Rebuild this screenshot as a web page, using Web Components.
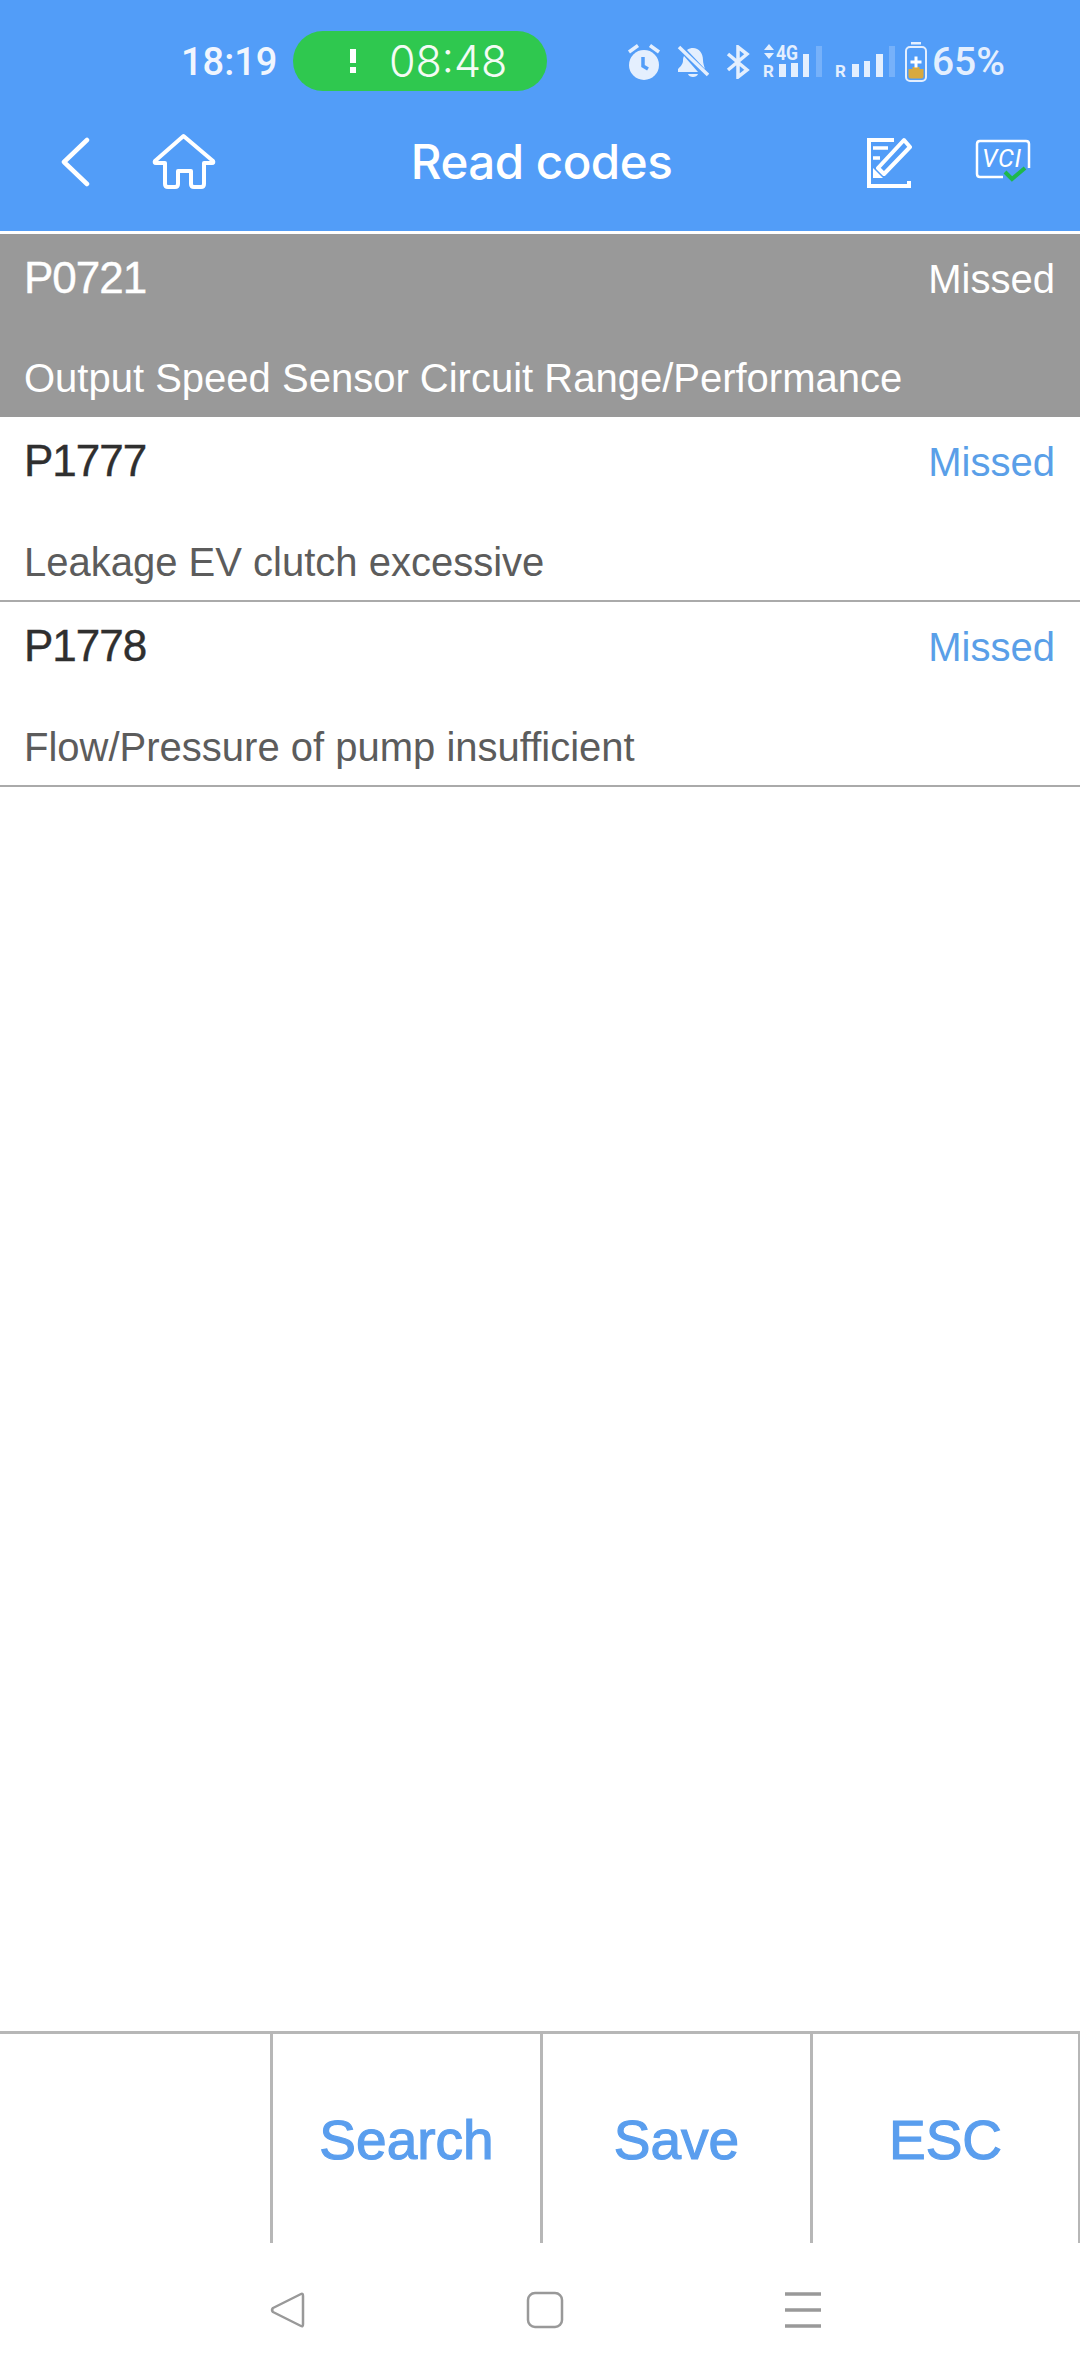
<!DOCTYPE html>
<html>
<head>
<meta charset="utf-8">
<title>Read codes</title>
<style>
    html, body { margin: 0; padding: 0; background: #fff; }
    body { width: 1080px; height: 2376px; display: flex; flex-direction: column; font-family: "Liberation Sans", Arial, sans-serif; }
    code-list { flex: 1; }
</style>
</head>
<body>
<status-bar></status-bar>
<app-header title-text="Read codes"></app-header>
<code-list>
    <code-row code="P0721" state="Missed" selected>Output Speed Sensor Circuit Range/Performance</code-row>
    <code-row code="P1777" state="Missed">Leakage EV clutch excessive</code-row>
    <code-row code="P1778" state="Missed">Flow/Pressure of pump insufficient</code-row>
</code-list>
<bottom-bar>
    <bar-button></bar-button>
    <bar-button>Search</bar-button>
    <bar-button>Save</bar-button>
    <bar-button>ESC</bar-button>
</bottom-bar>
<nav-bar></nav-bar>

<script>
class StatusBar extends HTMLElement {
    constructor() {
        super();
        this.attachShadow({ mode: 'open' });
        this.shadowRoot.innerHTML = `
            <style>
                :host {
                    display: flex;
                    align-items: center;
                    height: 92px;
                    padding: 31px 75px 0 181px;
                    box-sizing: border-box;
                    background: #529df8;
                    color: #fff;
                    font-family: Roboto, sans-serif;
                }
                .time { font-size: 38px; font-weight: 500; color: #f1f6fe; width: 112px; }
                .pill {
                    display: flex;
                    align-items: center;
                    width: 254px;
                    height: 60px;
                    border-radius: 30px;
                    background: #2fc84f;
                    margin-top: -1px;
                    box-sizing: border-box;
                    padding-left: 57px;
                }
                .mark { width: 6px; height: 24px; display: flex; flex-direction: column; justify-content: space-between; }
                .mark i { display: block; background: #fff; }
                .mark i:first-child { height: 14px; }
                .mark i:last-child { height: 6px; }
                .timer { font: 300 43px/1 Inter, sans-serif; margin-left: 33px; color: #f4fbf5; }
                .icons { display: flex; align-items: center; margin-left: auto; color: #e4effe; }
                svg { display: block; fill: currentColor; }
                .pct { font-size: 39px; font-weight: 500; margin-left: 5px; }
                .sig { position: relative; width: 61px; height: 36px; font-weight: 700; }
                .sig span { position: absolute; white-space: nowrap; }
                .sig .r { left: 0; top: 19px; font-size: 17px; line-height: 17px; }
                .sig .g { left: 13px; top: -1px; font-size: 20px; line-height: 20px; transform: scaleX(.88); transform-origin: left; }
            </style>
            <span class="time">18:19</span>
            <div class="pill"><span class="mark"><i></i><i></i></span><span class="timer">08:48</span></div>
            <div class="icons">
                <svg width="34" height="38" viewBox="0 0 34 38" style="margin-right:16px">
                    <circle cx="17" cy="22" r="15"/>
                    <path d="M2 9l9-6.500M32 9l-9-6.500" stroke="currentColor" stroke-width="3.500" fill="none"/>
                    <path d="M16 14v9l5 3" stroke="#529df8" stroke-width="3.500" fill="none"/>
                </svg>
                <svg width="32" height="34" viewBox="0 0 32 34" style="margin-right:17px">
                    <path d="M16 3c-2 0-4 .5-6 2l18 19c-1-3-2-6-2-9 0-7-4-12-10-12zM7 11c-1 2-1 3-1 5 0 3-3 6-5 8v3h20zM11 29h10c-1 4-9 4-10 0z"/>
                    <path d="M2 2l29 28" stroke="currentColor" stroke-width="3.500"/>
                </svg>
                <svg width="24" height="34" viewBox="0 0 24 34" style="margin-right:13px">
                    <path d="M2 9l19 16-9 7V2l9 7L2 25" stroke="currentColor" stroke-width="3.500" fill="none"/>
                </svg>
                <div class="sig" style="margin-right:11px">
                    <svg width="61" height="36" viewBox="0 0 61 36">
                        <path d="M1 6l5-6 5 6zM1 9h10l-5 6z"/>
                        <rect x="16" y="20" width="7" height="13"/><rect x="28" y="19" width="7" height="14"/><rect x="40" y="10" width="6" height="23"/>
                        <rect x="53" y="2" width="6" height="31" opacity=".25"/>
                    </svg>
                    <span class="g">4G</span><span class="r">R</span>
                </div>
                <div class="sig" style="margin-right:9px">
                    <svg width="61" height="36" viewBox="0 0 61 36">
                        <rect x="17" y="20" width="7" height="13"/><rect x="29" y="17" width="6" height="16"/><rect x="41" y="10" width="7" height="23"/>
                        <rect x="54" y="2" width="6" height="31" opacity=".25"/>
                    </svg>
                    <span class="r">R</span>
                </div>
                <svg width="22" height="40" viewBox="0 0 22 40">
                    <rect x="6" y="0" width="10" height="2.500"/>
                    <rect x="1" y="5" width="20" height="34" rx="4" fill="none" stroke="currentColor" stroke-width="2"/>
                    <path d="M3.500 27h4v-2h7v2h4v7q0 2.500-2.500 2.500H6q-2.500 0-2.500-2.500z" fill="#d8a93f"/>
                    <path d="M5.500 20h11M11 14.500v11" stroke="#fff" stroke-width="3" fill="none"/>
                </svg>
                <span class="pct">65%</span>
            </div>
        `;
    }
}

class AppHeader extends HTMLElement {
    constructor() {
        super();
        this.attachShadow({ mode: 'open' });
        this.shadowRoot.innerHTML = `
            <style>
                :host {
                    display: grid;
                    grid-template-columns: 1fr auto 1fr;
                    align-items: center;
                    height: 139px;
                    padding: 0 49px 0 60px;
                    box-sizing: border-box;
                    background: #529df8;
                    color: #fff;
                }
                .left, .right { display: flex; align-items: center; }
                .right { justify-content: flex-end; }
                svg { display: block; fill: none; stroke: #fff; }
                h1 {
                    margin: 0 0 0 -8px;
                    font: 500 47.5px Inter, sans-serif;
                    letter-spacing: -.5px;
                    color: #fff;
                }
                .vci { position: relative; width: 56px; height: 45px; }
                .vci span {
                    position: absolute;
                    left: 7px;
                    top: 7px;
                    font: italic 400 25px/25px Roboto, sans-serif;
                    letter-spacing: .7px;
                    white-space: nowrap;
                }
            </style>
            <div class="left">
                <svg width="30" height="50" viewBox="0 0 30 50" style="margin-right:60px">
                    <path d="M27 3L4 25l23 22" stroke-width="4.500" stroke-linecap="round" stroke-linejoin="round"/>
                </svg>
                <svg width="68" height="57" viewBox="0 0 68 57">
                    <path d="M33.500 3L63 28q1 2-1 2H54v21q0 3-3 3H44q-3 0-3-3V38H28v13q0 3-3 3H18q-3 0-3-3V30H6q-2 0-1-2z" stroke-width="4" stroke-linejoin="round"/>
                </svg>
            </div>
            <h1></h1>
            <div class="right">
                <svg width="46" height="52" viewBox="0 0 46 52" style="margin-right:63px">
                    <path d="M28 4H3v46h40v-5" stroke-width="4"/>
                    <path d="M38 4l6 7-26 27-6-6z" stroke-width="4" stroke-linejoin="round"/>
                    <path d="M7 12h15M7 22h7" stroke-width="3.500"/>
                    <path d="M7 32v10h10z" fill="#fff" stroke="none"/>
                </svg>
                <div class="vci">
                    <svg width="56" height="45" viewBox="0 0 56 45">
                        <path d="M28 38H5q-3 0-3-3V5q0-3 3-3h46q3 0 3 3v24" stroke-width="2.500"/>
                        <path d="M30 33l7 7 13-11" stroke="#1fb84c" stroke-width="4"/>
                    </svg>
                    <span>VCI</span>
                </div>
            </div>
        `;
        this.shadowRoot.querySelector('h1').textContent = this.getAttribute('title-text');
    }
}

class CodeList extends HTMLElement {
    constructor() {
        super();
        this.attachShadow({ mode: 'open' });
        this.shadowRoot.innerHTML = `
            <style>
                :host { display: block; padding-top: 3px; background: #fff; }
            </style>
            <slot></slot>
        `;
    }
}

class CodeRow extends HTMLElement {
    constructor() {
        super();
        this.attachShadow({ mode: 'open' });
        this.shadowRoot.innerHTML = `
            <style>
                :host {
                    display: block;
                    height: 185px;
                    padding: 0 25px 0 24px;
                    box-sizing: border-box;
                    border-bottom: 2px solid #aaa;
                    background: #fff;
                    color: #5c5c5c;
                }
                :host([selected]) { height: 183px; background: #999; color: #fff; border-bottom: 0; }
                .top { display: flex; justify-content: space-between; align-items: baseline; padding-top: 20px; }
                .code { font-size: 44px; line-height: 48px; color: #2f2f2f; letter-spacing: -1px; -webkit-text-stroke: .4px currentColor; }
                .state { font-size: 40px; line-height: 48px; color: #5a9fe8; }
                :host([selected]) .code, :host([selected]) .state { color: #fff; }
                .desc { font-size: 40px; line-height: 48px; margin-top: 52px; white-space: nowrap; }
                :host([selected]) .desc { margin-top: 51px; }
            </style>
            <div class="top"><span class="code"></span><span class="state"></span></div>
            <div class="desc"><slot></slot></div>
        `;
        this.shadowRoot.querySelector('.code').textContent = this.getAttribute('code');
        this.shadowRoot.querySelector('.state').textContent = this.getAttribute('state');
    }
}

class BottomBar extends HTMLElement {
    constructor() {
        super();
        this.attachShadow({ mode: 'open' });
        this.shadowRoot.innerHTML = `
            <style>
                :host {
                    display: grid;
                    grid-template-columns: repeat(4, 1fr);
                    height: 212px;
                    box-sizing: border-box;
                    border-top: 3px solid #b7b7b7;
                    background: #fff;
                }
                ::slotted(bar-button:first-child) { border-left-color: transparent; }
                ::slotted(bar-button:last-child) { border-right: 2px solid #b7b7b7; }
            </style>
            <slot></slot>
        `;
    }
}

class BarButton extends HTMLElement {
    constructor() {
        super();
        this.attachShadow({ mode: 'open' });
        this.shadowRoot.innerHTML = `
            <style>
                :host {
                    display: flex;
                    align-items: center;
                    justify-content: center;
                    padding-top: 2px;
                    border-left: 3px solid #b7b7b7;
                    font-size: 55px;
                    color: #5a9eee;
                    -webkit-text-stroke: 1.200px #5a9eee;
                }
            </style>
            <slot></slot>
        `;
    }
}

class NavBar extends HTMLElement {
    constructor() {
        super();
        this.attachShadow({ mode: 'open' });
        this.shadowRoot.innerHTML = `
            <style>
                :host {
                    display: flex;
                    align-items: center;
                    justify-content: space-between;
                    height: 133px;
                    padding: 0 258px 0 270px;
                    box-sizing: border-box;
                    background: #fff;
                }
                svg { display: block; fill: none; stroke: #999; stroke-width: 2.500; }
            </style>
            <svg width="36" height="38" viewBox="0 0 36 38"><path d="M31 3q2-1 2 2v28q0 3-2 2L3 21q-2-2 0-4z" stroke-linejoin="round"/></svg>
            <svg width="38" height="38" viewBox="0 0 38 38"><rect x="2" y="2" width="34" height="34" rx="7"/></svg>
            <svg width="38" height="38" viewBox="0 0 38 38"><path d="M1 3h36M1 19h36M1 35h36" stroke-width="3.500"/></svg>
        `;
    }
}

customElements.define('status-bar', StatusBar);
customElements.define('app-header', AppHeader);
customElements.define('code-list', CodeList);
customElements.define('code-row', CodeRow);
customElements.define('bottom-bar', BottomBar);
customElements.define('bar-button', BarButton);
customElements.define('nav-bar', NavBar);
</script>
</body>
</html>
